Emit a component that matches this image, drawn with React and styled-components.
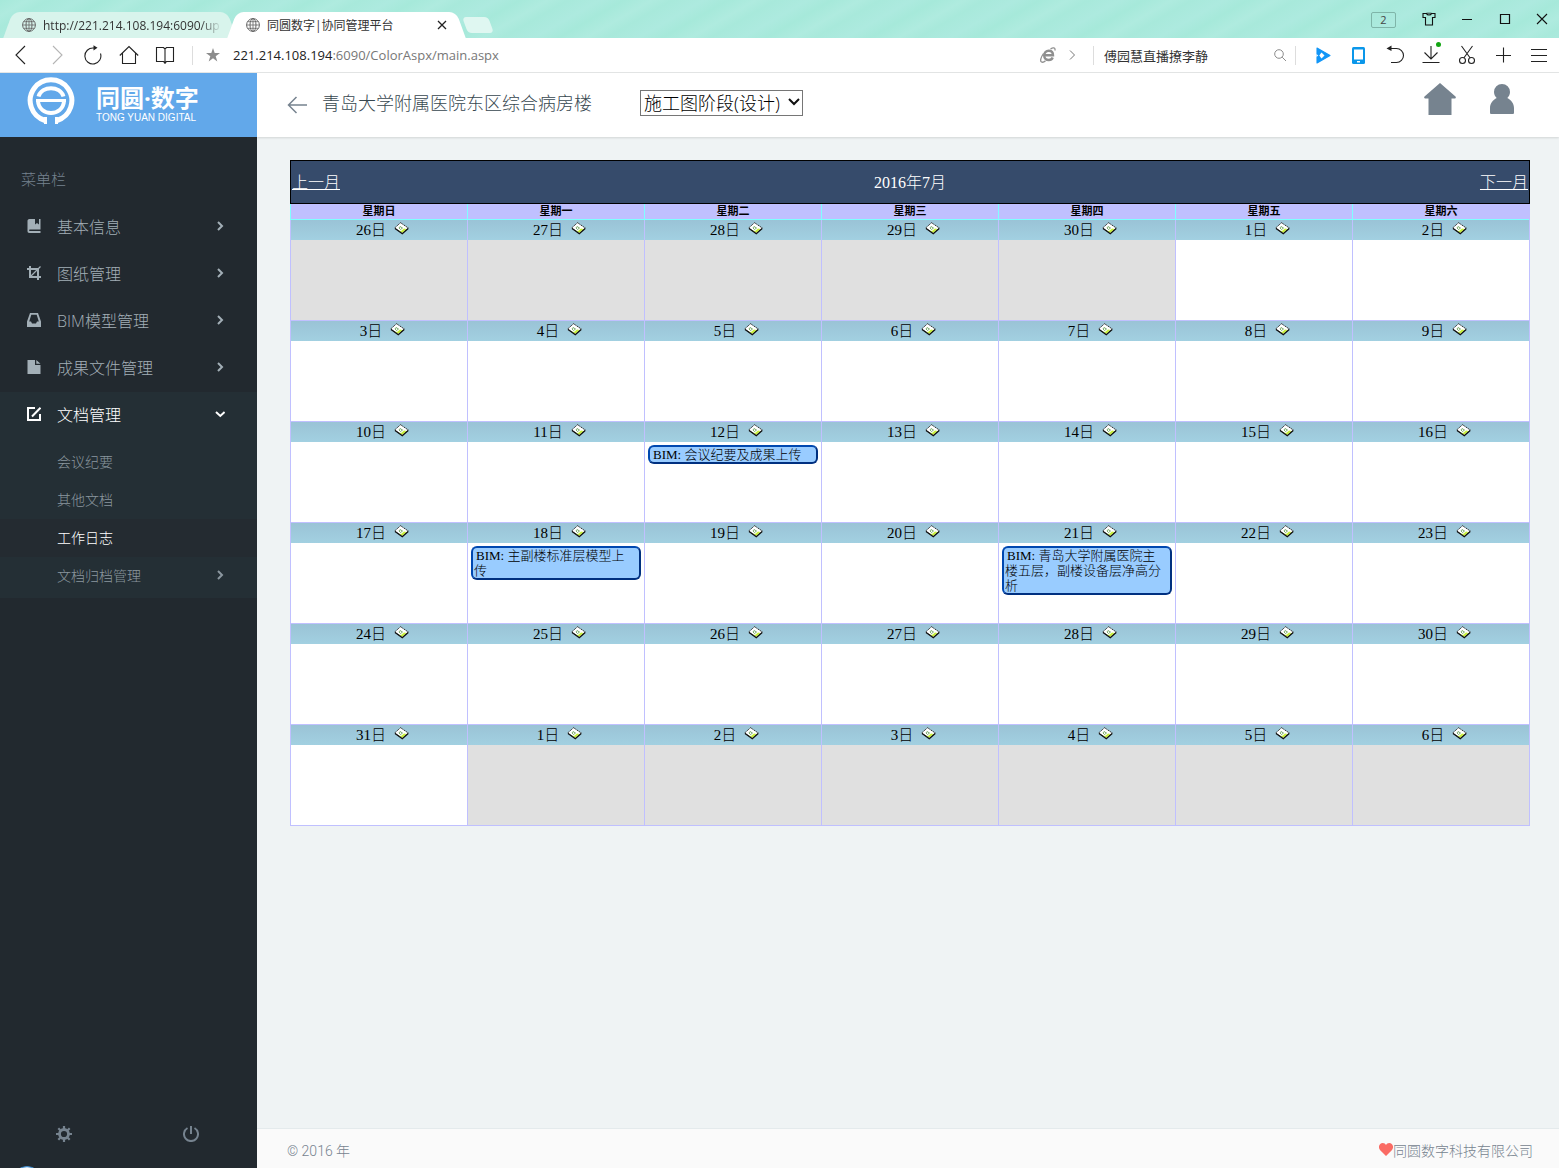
import styled, { createGlobalStyle } from 'styled-components'

const weekDays = ['星期日', '星期一', '星期二', '星期三', '星期四', '星期五', '星期六']

const events = {
  '7-12': '会议纪要及成果上传',
  '7-18': '主副楼标准层模型上传',
  '7-21': '青岛大学附属医院主楼五层，副楼设备层净高分析',
}

function buildWeeks() {
  const start = new Date(2016, 5, 26)
  const weeks = []
  for (let w = 0; w < 6; w++) {
    const days = []
    for (let d = 0; d < 7; d++) {
      const date = new Date(2016, 5, start.getDate() + w * 7 + d)
      const month = date.getMonth() + 1
      const day = date.getDate()
      days.push({ key: month + '-' + day, day, outside: month !== 7 })
    }
    weeks.push(days)
  }
  return weeks
}

const menu = [
  { label: '基本信息', icon: <BookIcon /> },
  { label: '图纸管理', icon: <CropIcon /> },
  { label: 'BIM模型管理', icon: <InboxIcon /> },
  { label: '成果文件管理', icon: <FileIcon /> },
]

const subMenu = [
  { label: '会议纪要' },
  { label: '其他文档' },
  { label: '工作日志', active: true },
  { label: '文档归档管理', more: true },
]

export default function App() {
  return (
    <Page>
      <GlobalStyle />
      <TabStrip />
      <Toolbar />
      <Main>
        <SideBar />
        <Content>
          <Header />
          <Calendar />
          <Footer>
            <span>© 2016 年</span>
            <Company>
              <HeartIcon />
              同圆数字科技有限公司
            </Company>
          </Footer>
        </Content>
      </Main>
    </Page>
  )
}

function TabStrip() {
  return (
    <Strip>
      <Tab>
        <GlobeIcon />
        <TabText $fade>http://221.214.108.194:6090/up</TabText>
      </Tab>
      <Tab $active>
        <GlobeIcon />
        <TabText>同圆数字|协同管理平台</TabText>
        <CloseTab aria-label="关闭标签">
          <svg width="10" height="10" viewBox="0 0 10 10">
            <path d="M1 1l8 8M9 1l-8 8" stroke="#222" strokeWidth="1.3" />
          </svg>
        </CloseTab>
      </Tab>
      <NewTab aria-label="新标签" />
      <WindowButtons>
        <Counter>2</Counter>
        <WindowButton aria-label="皮肤">
          <svg width="14" height="14" viewBox="0 0 14 14" fill="none" stroke="#111" strokeWidth="1.1">
            <path d="M1 1.500h3.500c.6 2 4.400 2 5 0H13v4h-2.500V13h-7V5.500H1z" />
            <path d="M4.500 1.200h5" strokeWidth=".8" />
          </svg>
        </WindowButton>
        <WindowButton aria-label="最小化">
          <svg width="12" height="12" viewBox="0 0 12 12"><path d="M1 6.500h10" stroke="#111" /></svg>
        </WindowButton>
        <WindowButton aria-label="最大化">
          <svg width="12" height="12" viewBox="0 0 12 12"><path d="M1.500 1.500h9v9h-9z" fill="none" stroke="#111" strokeWidth="1.200" /></svg>
        </WindowButton>
        <WindowButton aria-label="关闭">
          <svg width="12" height="12" viewBox="0 0 12 12"><path d="M1 1l10 10M11 1L1 11" stroke="#111" strokeWidth="1.100" /></svg>
        </WindowButton>
      </WindowButtons>
    </Strip>
  )
}

function Toolbar() {
  return (
    <Bar>
      <ToolButton aria-label="后退">
        <Line><path d="M14 1L5 10l9 9" /></Line>
      </ToolButton>
      <ToolButton aria-label="前进" $dim>
        <Line><path d="M6 1l9 9-9 9" /></Line>
      </ToolButton>
      <ToolButton aria-label="刷新">
        <Line>
          <path d="M17.500 8.500A8 8 0 1 1 10.500 3H13" />
          <path d="M10.500 .2l4 2.600-4 2.800z" fill="currentColor" stroke="none" />
        </Line>
      </ToolButton>
      <ToolButton aria-label="主页">
        <Line><path d="M.8 10.500L10 1.500l9.200 9M3.500 8v10.500h13V8" /></Line>
      </ToolButton>
      <ToolButton aria-label="阅读">
        <Line><path d="M10 4.500V19M10 4L8.500 2.500h-7v14h7L10 18l1.500-1.500h7v-14h-7z" /></Line>
      </ToolButton>
      <Divider />
      <Star aria-label="收藏">
        <svg width="14" height="14" viewBox="0 0 14 14">
          <path d="M7 0l1.700 5H14L9.700 8.200 11.300 13.500 7 10.300 2.700 13.500 4.300 8.200 0 5h5.300z" fill="#8c8c8c" />
        </svg>
      </Star>
      <Address>
        <b>221.214.108.194</b>:6090/ColorAspx/main.aspx
      </Address>
      <SmallButton aria-label="浏览器内核">
        <svg width="16" height="16" viewBox="0 0 16 16" fill="none" stroke="#8f8f8f">
          <path d="M4.500 8.300H13C13 5.500 11.300 3.700 8.800 3.700 6 3.700 4.200 5.800 4.200 8.500c0 2.800 1.900 4.500 4.600 4.500 1.900 0 3.300-.9 3.900-2.500" strokeWidth="2.400" />
          <path d="M10.500 2C13 .4 15.500.4 15 3.500M3.500 6.500C.8 10.500-.2 14 1.500 15c1.200.6 3-.3 4-1.300" strokeWidth="1.300" />
        </svg>
      </SmallButton>
      <SmallButton aria-label="展开">
        <svg width="8" height="10" viewBox="0 0 8 10"><path d="M2 .5L6.500 5 2 9.500" fill="none" stroke="#777" /></svg>
      </SmallButton>
      <SearchBox>
        <SearchInput aria-label="搜索" defaultValue="傅园慧直播撩李静" />
        <svg width="12" height="12" viewBox="0 0 12 12" fill="none" stroke="#8c8c8c">
          <circle cx="5" cy="5" r="4.300" />
          <path d="M8.200 8.200L12 12" />
        </svg>
      </SearchBox>
      <ToolButton aria-label="视频">
        <Line>
          <path d="M4 3l13 7.500L4 18z" fill="#1296f7" stroke="#1296f7" strokeLinejoin="round" />
          <path d="M8.500 7.500l3 3-3 3-2.200-3z" fill="#fff" stroke="none" />
          <path d="M3.400 9l1.800 1.500L3.400 12z" fill="#fff" stroke="none" />
        </Line>
      </ToolButton>
      <ToolButton aria-label="手机">
        <Line>
          <rect x="3" y="2" width="13" height="17" rx="1.500" fill="#0a97ea" stroke="none" />
          <path d="M5 4.500h9v10H5zM8 16h3v1.500H8z" fill="#fff" stroke="none" />
        </Line>
      </ToolButton>
      <ToolButton aria-label="撤销">
        <Line>
          <path d="M3 3.500h8.500a6.500 6.500 0 0 1 0 14H6" />
          <path d="M6.500 .5L1.500 3.500l5 2.500z" fill="currentColor" stroke="none" />
        </Line>
      </ToolButton>
      <ToolButton aria-label="下载">
        <Line>
          <path d="M10 1v13M3.500 7.500L10 14l6.500-6.500M1.500 17.500h17" />
        </Line>
        <GreenDot />
      </ToolButton>
      <ToolButton aria-label="截图">
        <Line>
          <path d="M4.500 1l8.700 12M15.500 1L6.800 13" />
          <circle cx="5.500" cy="15.500" r="3" />
          <circle cx="14.500" cy="15.500" r="3" />
        </Line>
      </ToolButton>
      <ToolButton aria-label="添加">
        <Line><path d="M10.500 2.500v15M3 10.500h15" /></Line>
      </ToolButton>
      <ToolButton aria-label="菜单">
        <Line><path d="M2 4.500h16M2 10.500h16M2 16.500h16" /></Line>
      </ToolButton>
    </Bar>
  )
}

function SideBar() {
  return (
    <Side>
      <Logo href="#">
        <svg width="48" height="48" viewBox="0 0 48 48" fill="none" stroke="#fff">
          <path d="M18 43.500A20.800 20.800 0 1 1 30 43.500" strokeWidth="5" />
          <path d="M18.500 40v7M29.500 40v7" strokeWidth="3" />
          <path d="M11.500 19.500C15 8.500 33 8.500 36.500 19.500" strokeWidth="4" />
          <path d="M9 23.500h30" strokeWidth="3" />
          <path d="M11 24C12 40 36 40 37 24" strokeWidth="4" />
        </svg>
        <LogoText>
          <strong>同圆·数字</strong>
          <small>TONG YUAN DIGITAL</small>
        </LogoText>
      </Logo>
      <MenuLabel>菜单栏</MenuLabel>
      <nav>
        {menu.map(item => (
          <MenuItem key={item.label} href="#">
            {item.icon}
            <span>{item.label}</span>
            <Arrow />
          </MenuItem>
        ))}
        <OpenGroup>
          <MenuItem href="#" $active>
            <EditIcon />
            <span>文档管理</span>
            <Arrow down />
          </MenuItem>
          <SubList>
            {subMenu.map(item => (
              <SubItem key={item.label} href="#" $active={item.active}>
                <span>{item.label}</span>
                {item.more && <Arrow />}
              </SubItem>
            ))}
          </SubList>
        </OpenGroup>
      </nav>
      <SideFooter>
        <SideButton aria-label="设置"><GearIcon /></SideButton>
        <SideButton aria-label="退出"><PowerIcon /></SideButton>
      </SideFooter>
      <Bubble />
    </Side>
  )
}

function Header() {
  return (
    <Head>
      <BackButton aria-label="返回">
        <svg width="20" height="18" viewBox="0 0 20 18" fill="none" stroke="#76838f" strokeWidth="1.500">
          <path d="M20 9H1.500M9.500 1l-8 8 8 8" />
        </svg>
      </BackButton>
      <ProjectName>青岛大学附属医院东区综合病房楼</ProjectName>
      <StageBox>
        <Stage aria-label="阶段">
          <option>施工图阶段(设计)</option>
        </Stage>
        <svg width="12" height="8" viewBox="0 0 12 8">
          <path d="M1 1l5 5 5-5" fill="none" stroke="#111" strokeWidth="2" />
        </svg>
      </StageBox>
      <HeadLinks>
        <IconButton aria-label="首页">
          <svg width="32" height="32" viewBox="0 0 32 32">
            <path d="M16 0l15.500 13.500c1 1-.2 2.500-1.500 2H27.500V32h-23V15.500H2C.6 16-.5 14.500.5 13.500z" fill="#76838f" />
          </svg>
        </IconButton>
        <IconButton aria-label="用户">
          <svg width="24" height="30" viewBox="0 0 24 30">
            <path d="M12 0a8 8 0 0 1 8 8c0 2.600-1.200 4.500-2.700 6C21 15.800 24 19.500 24 24v4.500c0 1-.5 1.500-1.500 1.500h-21C.5 30 0 29.500 0 28.500V24c0-4.500 3-8.200 6.700-10C5.200 12.500 4 10.600 4 8a8 8 0 0 1 8-8z" fill="#76838f" />
          </svg>
        </IconButton>
      </HeadLinks>
    </Head>
  )
}

function Calendar() {
  return (
    <CalendarBox>
      <MonthBar>
        <MonthLink href="#">上一月</MonthLink>
        <span>2016年7月</span>
        <MonthLink href="#">下一月</MonthLink>
      </MonthBar>
      <Table>
        <thead>
          <tr>
            {weekDays.map(name => <WeekDay key={name}>{name}</WeekDay>)}
          </tr>
        </thead>
        <tbody>
          {buildWeeks().map(week => (
            <tr key={week[0].key}>
              {week.map(item => (
                <Day key={item.key} $outside={item.outside}>
                  <DayHead>
                    {item.day}日
                    <NoteButton aria-label="添加日志"><NoteIcon /></NoteButton>
                  </DayHead>
                  <DayBody>
                    {events[item.key] && <Event>BIM: {events[item.key]}</Event>}
                  </DayBody>
                </Day>
              ))}
            </tr>
          ))}
        </tbody>
      </Table>
    </CalendarBox>
  )
}

function Line({ children }) {
  return (
    <svg width="20" height="20" viewBox="0 0 20 20" fill="none" stroke="currentColor" strokeWidth="1.100">
      {children}
    </svg>
  )
}

function GlobeIcon() {
  return (
    <svg width="14" height="14" viewBox="0 0 14 14" fill="none" stroke="#666">
      <circle cx="7" cy="7" r="6.400" />
      <ellipse cx="7" cy="7" rx="3" ry="6.400" />
      <path d="M7 .6v12.800M.6 7h12.800M1.700 3.700h10.600M1.700 10.300h10.600" strokeWidth=".8" />
    </svg>
  )
}

function Arrow({ down }) {
  return (
    <svg width="10" height="10" viewBox="0 0 10 10" fill="none" stroke="currentColor" strokeWidth="2">
      <path d={down ? 'M1 3l4.300 4L9.600 3' : 'M3 1l4 4-4 4'} />
    </svg>
  )
}

function BookIcon() {
  return (
    <svg width="14" height="14" viewBox="0 0 14 14" fill="currentColor">
      <path d="M2.500 0H8v5.500l2-1.500 2 1.500V0h1.500v10.500H2.800c-1 0-1 1.500 0 1.500h10.700v2H2.500C1 14 .5 13 .5 12V2C.5 1 1 0 2.500 0z" />
    </svg>
  )
}

function CropIcon() {
  return (
    <svg width="14" height="14" viewBox="0 0 14 14" fill="none" stroke="currentColor" strokeWidth="2">
      <path d="M0 3h11v11M3 0v11h11" />
      <path d="M3 11L13.500 .5" strokeWidth="1.300" />
    </svg>
  )
}

function InboxIcon() {
  return (
    <svg width="14" height="14" viewBox="0 0 14 14" fill="currentColor" fillRule="evenodd">
      <path d="M3 0h8l3 8.500V14H0V8.500zM4.300 1.800L2.200 8.500H4L5 10.500h4l1-2h1.800L9.700 1.800z" />
    </svg>
  )
}

function FileIcon() {
  return (
    <svg width="14" height="14" viewBox="0 0 14 14" fill="currentColor">
      <path d="M.5 0H8v5h5.500v9H.5zM9.300 0l4.200 3.800H9.300z" />
    </svg>
  )
}

function EditIcon() {
  return (
    <svg width="14" height="14" viewBox="0 0 14 14" fill="none" stroke="currentColor" strokeWidth="2">
      <path d="M8 1H1v12h12V7" />
      <path d="M5 9.500L13.500 .8" />
    </svg>
  )
}

function GearIcon() {
  return (
    <svg width="16" height="16" viewBox="0 0 16 16" fill="none" stroke="currentColor">
      <circle cx="8" cy="8" r="4.500" strokeWidth="2.800" />
      <path d="M8 0v3M8 13v3M0 8h3M13 8h3M2.300 2.300l2 2M11.700 11.700l2 2M2.300 13.700l2-2M11.700 4.300l2-2" strokeWidth="2.200" />
    </svg>
  )
}

function PowerIcon() {
  return (
    <svg width="16" height="16" viewBox="0 0 16 16" fill="none" stroke="currentColor" strokeWidth="2">
      <path d="M4.500 2A7 7 0 1 0 11.500 2M8 0v8" />
    </svg>
  )
}

function HeartIcon() {
  return (
    <svg width="14" height="13" viewBox="0 0 14 13">
      <path d="M7 13L1.200 7.200C-1.500 4 .5 0 3.700 0 5.300 0 6.400.8 7 2 7.600.8 8.700 0 10.300 0c3.200 0 5.200 4 2.500 7.200z" fill="#fa6b64" />
    </svg>
  )
}

function NoteIcon() {
  return (
    <svg width="15" height="13" viewBox="0 0 15 13">
      <path d="M6.500 .7L14.300 6 8.500 11.300.7 6z" fill="#fff" stroke="#333" strokeDasharray="1.500 .6" />
      <path d="M4.500 8.500l4 2.300 4-3.800L10 6.500 7 9z" fill="#c8f03c" />
      <path d="M1 6.500l7.300 5.300L14.200 6.500" fill="none" stroke="#111" strokeWidth="1.200" />
      <path d="M6 4.500l2.500 1.500L6.500 7.500 5 6z" fill="none" stroke="#5f9a4a" strokeWidth=".8" />
    </svg>
  )
}

const GlobalStyle = createGlobalStyle`
  *{
    box-sizing: border-box;
  }
  body{
    margin: 0;
    font-family: "Open Sans", "Noto Sans CJK SC", sans-serif;
    background-color: #eff3f4;
  }
  button{
    padding: 0;
    border: none;
    background: none;
  }
  a{
    color: inherit;
    text-decoration: none;
  }
  svg{
    display: block;
    flex-shrink: 0;
  }
`

const Page = styled.div`
  display: flex;
  flex-direction: column;
  min-height: 100vh;
`

const Strip = styled.div`
  display: flex;
  align-items: flex-end;
  height: 38px;
  padding-left: 8px;
  background: repeating-linear-gradient(150deg, #a6e9da 0px, #afebdf 14px, #a8e9db 24px, #adeadf 40px, #a6e9da 52px);
`

const Tab = styled.div`
  position: relative;
  z-index: ${props => props.$active ? 1 : 0};
  isolation: isolate;
  display: flex;
  align-items: center;
  gap: 7px;
  width: ${props => props.$active ? '229px' : '224px'};
  height: 26px;
  padding: 0 10px 0 14px;
  font-size: 12px;
  color: #333;
  &::before, &::after{
    content: '';
    position: absolute;
    z-index: -1;
    top: 0;
    bottom: 0;
    width: 60%;
    background-color: ${props => props.$active ? '#fff' : '#d8f4ec'};
  }
  &::before{
    left: 0;
    border-radius: 7px 0 0 0;
    transform: skewX(-20deg);
  }
  &::after{
    right: 0;
    border-radius: 0 7px 0 0;
    transform: skewX(20deg);
  }
`

const TabText = styled.span`
  flex: 1;
  white-space: nowrap;
  ${props => props.$fade && 'mask-image: linear-gradient(90deg, #000 88%, transparent);'}
`

const CloseTab = styled.button`
  padding-right: 4px;
`

const NewTab = styled.button`
  width: 26px;
  height: 16px;
  margin: 0 0 5px 4px;
  border-radius: 4px;
  background-color: #dff7f1;
  transform: skewX(20deg);
`

const WindowButtons = styled.div`
  display: flex;
  align-items: center;
  align-self: stretch;
  margin-left: auto;
`

const Counter = styled.button`
  width: 25px;
  height: 16px;
  margin: 2px 14px 0 0;
  border: 1px solid #7fb5a9;
  border-radius: 2px;
  font-family: "Open Sans", sans-serif;
  font-size: 11px;
  line-height: 14px;
  color: #444;
`

const WindowButton = styled.button`
  display: flex;
  align-items: center;
  justify-content: center;
  width: 38px;
  height: 38px;
  &:last-child{
    width: 35px;
  }
`

const Bar = styled.div`
  display: flex;
  align-items: center;
  height: 35px;
  padding: 0 2px 0 3px;
  background-color: #fff;
  border-bottom: 1px solid #e4e6e6;
`

const ToolButton = styled.button`
  position: relative;
  display: flex;
  align-items: center;
  justify-content: center;
  width: 36px;
  height: 34px;
  color: ${props => props.$dim ? '#b5b5b5' : '#222'};
`

const GreenDot = styled.i`
  position: absolute;
  top: 4px;
  right: 8px;
  width: 5px;
  height: 5px;
  border-radius: 50%;
  background-color: #12a512;
`

const Divider = styled.div`
  width: 1px;
  height: 19px;
  margin-left: 9px;
  background-color: #ddd;
`

const Star = styled.button`
  padding: 0 13px;
`

const Address = styled.div`
  flex: 1;
  font-size: 13px;
  color: #777;
  b{
    font-weight: 400;
    color: #222;
  }
`

const SmallButton = styled.button`
  display: flex;
  justify-content: center;
  width: 24px;
`

const SearchBox = styled.div`
  display: flex;
  align-items: center;
  width: 203px;
  height: 19px;
  margin: 0 9px;
  padding: 0 9px 0 10px;
  border-left: 1px solid #ddd;
  border-right: 1px solid #ddd;
`

const SearchInput = styled.input`
  flex: 1;
  min-width: 0;
  padding: 0;
  border: none;
  outline: none;
  font-family: "Open Sans", "Noto Sans CJK SC", sans-serif;
  font-size: 13px;
  color: #333;
`

const Main = styled.div`
  display: flex;
  flex: 1;
`

const Side = styled.aside`
  position: relative;
  display: flex;
  flex-direction: column;
  width: 257px;
  flex-shrink: 0;
  overflow: hidden;
  background-color: #22292f;
  color: #a3afb7;
  font-weight: 300;
`

const Logo = styled.a`
  display: flex;
  align-items: center;
  gap: 21px;
  height: 64px;
  padding: 0 27px 8px;
  background-color: #62a8ea;
  color: #fff;
`

const LogoText = styled.div`
  display: flex;
  flex-direction: column;
  padding-top: 6px;
  strong{
    font-size: 24px;
    font-weight: 700;
    line-height: 28px;
  }
  small{
    font-family: "Liberation Sans", sans-serif;
    font-size: 10px;
    font-weight: 400;
    line-height: 12px;
  }
`

const MenuLabel = styled.div`
  padding: 32px 21px 15px;
  font-size: 15px;
  line-height: 20px;
  color: #76838f;
`

const MenuItem = styled.a`
  display: flex;
  align-items: center;
  gap: 16px;
  height: 47px;
  padding: 0 32px 3px 27px;
  font-size: 16px;
  color: ${props => props.$active ? '#fff' : 'inherit'};
  span{
    flex: 1;
  }
`

const OpenGroup = styled.div`
  background-color: #242f35;
`

const SubList = styled.div`
  padding: 4px 0 3px;
`

const SubItem = styled.a`
  display: flex;
  align-items: center;
  justify-content: space-between;
  height: 38px;
  padding: 0 32px 2px 57px;
  font-size: 14px;
  color: ${props => props.$active ? '#fff' : '#8b979f'};
  background-color: ${props => props.$active ? '#242b31' : 'transparent'};
`

const SideFooter = styled.div`
  display: flex;
  height: 68px;
  margin-top: auto;
  padding-right: 2px;
`

const SideButton = styled.button`
  display: flex;
  align-items: center;
  justify-content: center;
  flex: 1;
  color: #76838f;
`

const Bubble = styled.div`
  position: absolute;
  left: 12px;
  bottom: -28px;
  width: 30px;
  height: 30px;
  border: 1px solid #3c8cd0;
  border-radius: 50%;
  background-color: #d5e6f5;
`

const Content = styled.main`
  display: flex;
  flex-direction: column;
  flex: 1;
  min-width: 0;
`

const Head = styled.header`
  display: flex;
  align-items: center;
  height: 64px;
  padding: 0 45px 4px 30px;
  background-color: #fff;
  box-shadow: 0 1px 2px rgba(0, 0, 0, 0.12);
`

const IconButton = styled.button`
  display: flex;
`

const BackButton = styled(IconButton)`
  padding-top: 4px;
`

const ProjectName = styled.h1`
  margin: 0 48px 0 15px;
  font-size: 18px;
  font-weight: 300;
  line-height: 26px;
  color: #37474f;
`

const StageBox = styled.div`
  position: relative;
  svg{
    position: absolute;
    top: 8px;
    right: 3px;
    pointer-events: none;
  }
`

const Stage = styled.select`
  display: block;
  appearance: none;
  height: 26px;
  padding: 0 22px 0 3px;
  border: 1px solid #767676;
  border-radius: 0;
  background-color: #fff;
  font-family: "Open Sans", "Noto Sans CJK SC", sans-serif;
  font-size: 18px;
  font-weight: 300;
  line-height: 24px;
  color: #000;
`

const HeadLinks = styled.div`
  display: flex;
  align-items: center;
  gap: 34px;
  margin-left: auto;
  padding-bottom: 8px;
`

const CalendarBox = styled.section`
  margin: 23px 29px 32px 33px;
  font-family: "Liberation Serif", "Noto Sans CJK SC", serif;
  color: #000;
`

const MonthBar = styled.div`
  display: flex;
  align-items: center;
  justify-content: space-between;
  height: 44px;
  padding: 0 1px 3px;
  border: 1px solid #000;
  background-color: #364b6b;
  color: #fff;
  font-size: 16px;
  font-weight: 300;
`

const MonthLink = styled.a`
  text-decoration: underline;
`

const Table = styled.table`
  width: 100%;
  table-layout: fixed;
  border-collapse: separate;
  border-spacing: 0;
  border-right: 1px solid #c0c0ff;
`

const WeekDay = styled.th`
  height: 16px;
  padding: 0;
  border-left: 1px solid #80ffff;
  border-bottom: 1px solid #80ffff;
  background-color: #c0c0ff;
  font-size: 11px;
  font-weight: 700;
  line-height: 15px;
`

const Day = styled.td`
  padding: 0;
  vertical-align: top;
  border-top: 1px solid #c0c0ff;
  border-left: 1px solid #c0c0ff;
  background-color: ${props => props.$outside ? '#e0e0e0' : '#fff'};
  tr:first-child > &{
    border-top: none;
  }
  tr:last-child > &{
    border-bottom: 1px solid #c0c0ff;
  }
`

const DayHead = styled.div`
  display: flex;
  align-items: center;
  justify-content: center;
  gap: 8px;
  height: 20px;
  padding-left: 7px;
  background: linear-gradient(#9ac3d6, #a2d0e1);
  font-size: 15px;
  font-weight: 300;
  line-height: 18px;
`

const NoteButton = styled.button`
  padding-bottom: 4px;
`

const DayBody = styled.div`
  min-height: 80px;
  padding: 3px;
`

const Event = styled.div`
  padding: 0 5px 0 1px;
  border: 2px solid #0048b0;
  border-right-color: #003080;
  border-bottom-color: #003080;
  border-radius: 6px;
  background-color: #99ccff;
  font-size: 13px;
  font-weight: 300;
  line-height: 15px;
  text-indent: 2px;
  word-break: break-all;
`

const Footer = styled.footer`
  display: flex;
  align-items: center;
  justify-content: space-between;
  height: 40px;
  margin-top: auto;
  padding: 2px 26px 0 30px;
  border-top: 1px solid #e4eaec;
  background-color: #fafafa;
  font-family: Roboto, "Noto Sans CJK SC", sans-serif;
  font-size: 14px;
  font-weight: 300;
  color: #76838f;
`

const Company = styled.div`
  display: flex;
  align-items: center;
`
